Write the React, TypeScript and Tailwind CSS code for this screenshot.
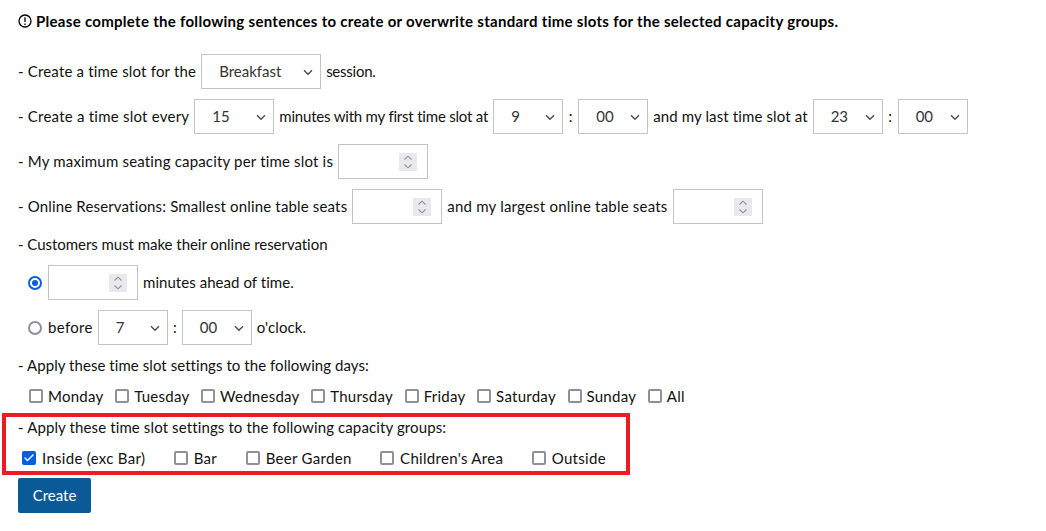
import type { ReactNode } from 'react'
import { Check } from 'lucide-react'

const DAYS = ['Monday', 'Tuesday', 'Wednesday', 'Thursday', 'Friday', 'Saturday', 'Sunday', 'All']
const GROUPS = ['Inside (exc Bar)', 'Bar', 'Beer Garden', "Children's Area", 'Outside']

function Select({ value, width }: { value: string; width: string }) {
  return (
    <span className={`relative flex h-[35px] shrink-0 items-center border border-[#c4c4c4] bg-white pl-[17px] text-[#333] ${width}`}>
      <span className="mb-[2px]">{value}</span>
      <svg className="absolute right-[7px] top-[14px] h-[7px] w-[10px]" viewBox="0 0 10 7" fill="none" stroke="#4a4a55" strokeWidth="1.4">
        <path d="M1 1.2 5 5.2 9 1.2" />
      </svg>
    </span>
  )
}

function NumberBox() {
  return (
    <span className="relative block h-[35px] w-[90px] shrink-0 border border-[#c4c4c4] bg-white">
      <span className="absolute right-[10px] top-[8px] block h-[18px] w-[18px] bg-[#e9e9ed]">
        <svg className="h-[18px] w-[18px]" viewBox="0 0 18 18" fill="none" stroke="#8f8f9d" strokeWidth="1.1">
          <path d="M5.5 6.5 9 3.2 12.5 6.5M5.5 11.5 9 14.8 12.5 11.5" />
        </svg>
      </span>
    </span>
  )
}

function Box({ checked }: { checked?: boolean }) {
  return checked ? (
    <span className="flex h-[14px] w-[14px] items-center justify-center rounded-[2px] bg-[#0060df]">
      <Check size={12} strokeWidth={3} color="white" />
    </span>
  ) : (
    <span className="block h-[14px] w-[14px] rounded-[2px] border-2 border-[#8f8f9d] bg-white" />
  )
}

function Row({ children }: { children: ReactNode }) {
  return <div className="flex h-[35px] items-center gap-[5px] whitespace-nowrap">{children}</div>
}

// text inside a row, tracking is set per piece because Lato runs a bit off the original font
function T({ children, className }: { children: ReactNode; className: string }) {
  return <span className={`mb-[2px] ${className}`}>{children}</span>
}

export default function App() {
  return (
    <div className="min-h-[531px] bg-white pl-[18px] pt-[13px] font-['Lato',sans-serif] text-[15px] leading-[22px] text-[#111]">
      <div className="flex h-[16px] items-center gap-[4px] font-bold tracking-[0.29px] text-black">
        <svg className="h-[14px] w-[14px]" viewBox="0 0 14 14" fill="none" stroke="black" strokeWidth="1.3">
          <circle cx="7" cy="7" r="6" />
          <path d="M7 3.2V8M7 9.5V11" />
        </svg>
        Please complete the following sentences to create or overwrite standard time slots for the selected capacity groups.
      </div>

      <div className="mt-[25px] flex flex-col gap-[10px]">
        <Row>
          <T className="tracking-[0.18px]">- Create a time slot for the</T>
          <Select value="Breakfast" width="w-[120px]" />
          <T className="tracking-[-0.25px]">session.</T>
        </Row>
        <Row>
          <T className="tracking-[0.23px]">- Create a time slot every</T>
          <Select value="15" width="w-[80px]" />
          <T className="tracking-[-0.2px]">minutes with my first time slot at</T>
          <Select value="9" width="w-[70px]" />
          <T className="w-[5px] text-center">:</T>
          <Select value="00" width="w-[70px]" />
          <T className="tracking-[0.12px]">and my last time slot at</T>
          <Select value="23" width="w-[70px]" />
          <T className="w-[5px] text-center">:</T>
          <Select value="00" width="w-[70px]" />
        </Row>
        <Row>
          <T className="tracking-[0.18px]">- My maximum seating capacity per time slot is</T>
          <NumberBox />
        </Row>
        <Row>
          <T className="tracking-[0.16px]">- Online Reservations: Smallest online table seats</T>
          <NumberBox />
          <T className="tracking-[0.21px]">and my largest online table seats</T>
          <NumberBox />
        </Row>
      </div>

      <div className="mt-[9px] tracking-[-0.04px]">- Customers must make their online reservation</div>

      <div className="mt-[10px] flex flex-col gap-[10px] pl-[10px]">
        <Row>
          <span className="mr-[1px] flex h-[14px] w-[14px] items-center justify-center rounded-full border-2 border-[#0060df] bg-white">
            <span className="block h-[6px] w-[6px] rounded-full bg-[#0060df]" />
          </span>
          <NumberBox />
          <T className="tracking-[0.05px]">minutes ahead of time.</T>
        </Row>
        <Row>
          <span className="mr-[1px] block h-[14px] w-[14px] rounded-full border-2 border-[#8f8f9d] bg-white" />
          <T className="tracking-[0.33px]">before</T>
          <Select value="7" width="w-[70px]" />
          <T className="w-[4px] text-center">:</T>
          <Select value="00" width="w-[70px]" />
          <T className="tracking-[0.12px]">o'clock.</T>
        </Row>
      </div>

      <div className="mt-[9px] tracking-[0.06px]">- Apply these time slot settings to the following days:</div>
      <div className="mt-[9px] flex gap-[11.6px] pl-[11px] tracking-[0.26px]">
        {DAYS.map((d) => (
          <label key={d} className="flex items-center gap-[5px]">
            <Box />
            {d}
          </label>
        ))}
      </div>

      <div className="-ml-[16px] mt-[6px] h-[62px] w-[628px] border-[4px] border-[#ed1c24] pl-[12px]">
        <div className="-mt-[1px] tracking-[0.12px]">- Apply these time slot settings to the following capacity groups:</div>
        <div className="mt-[9px] flex gap-[28.5px] pl-[4px] tracking-[0.3px]">
          {GROUPS.map((g, i) => (
            <label key={g} className="flex items-center gap-[6px]">
              <Box checked={i === 0} />
              {g}
            </label>
          ))}
        </div>
      </div>

      <button className="mt-[3px] flex h-[35px] w-[73px] items-center justify-center rounded-[2px] bg-[#0b5a98] pb-[2px] text-white">
        Create
      </button>
    </div>
  )
}
